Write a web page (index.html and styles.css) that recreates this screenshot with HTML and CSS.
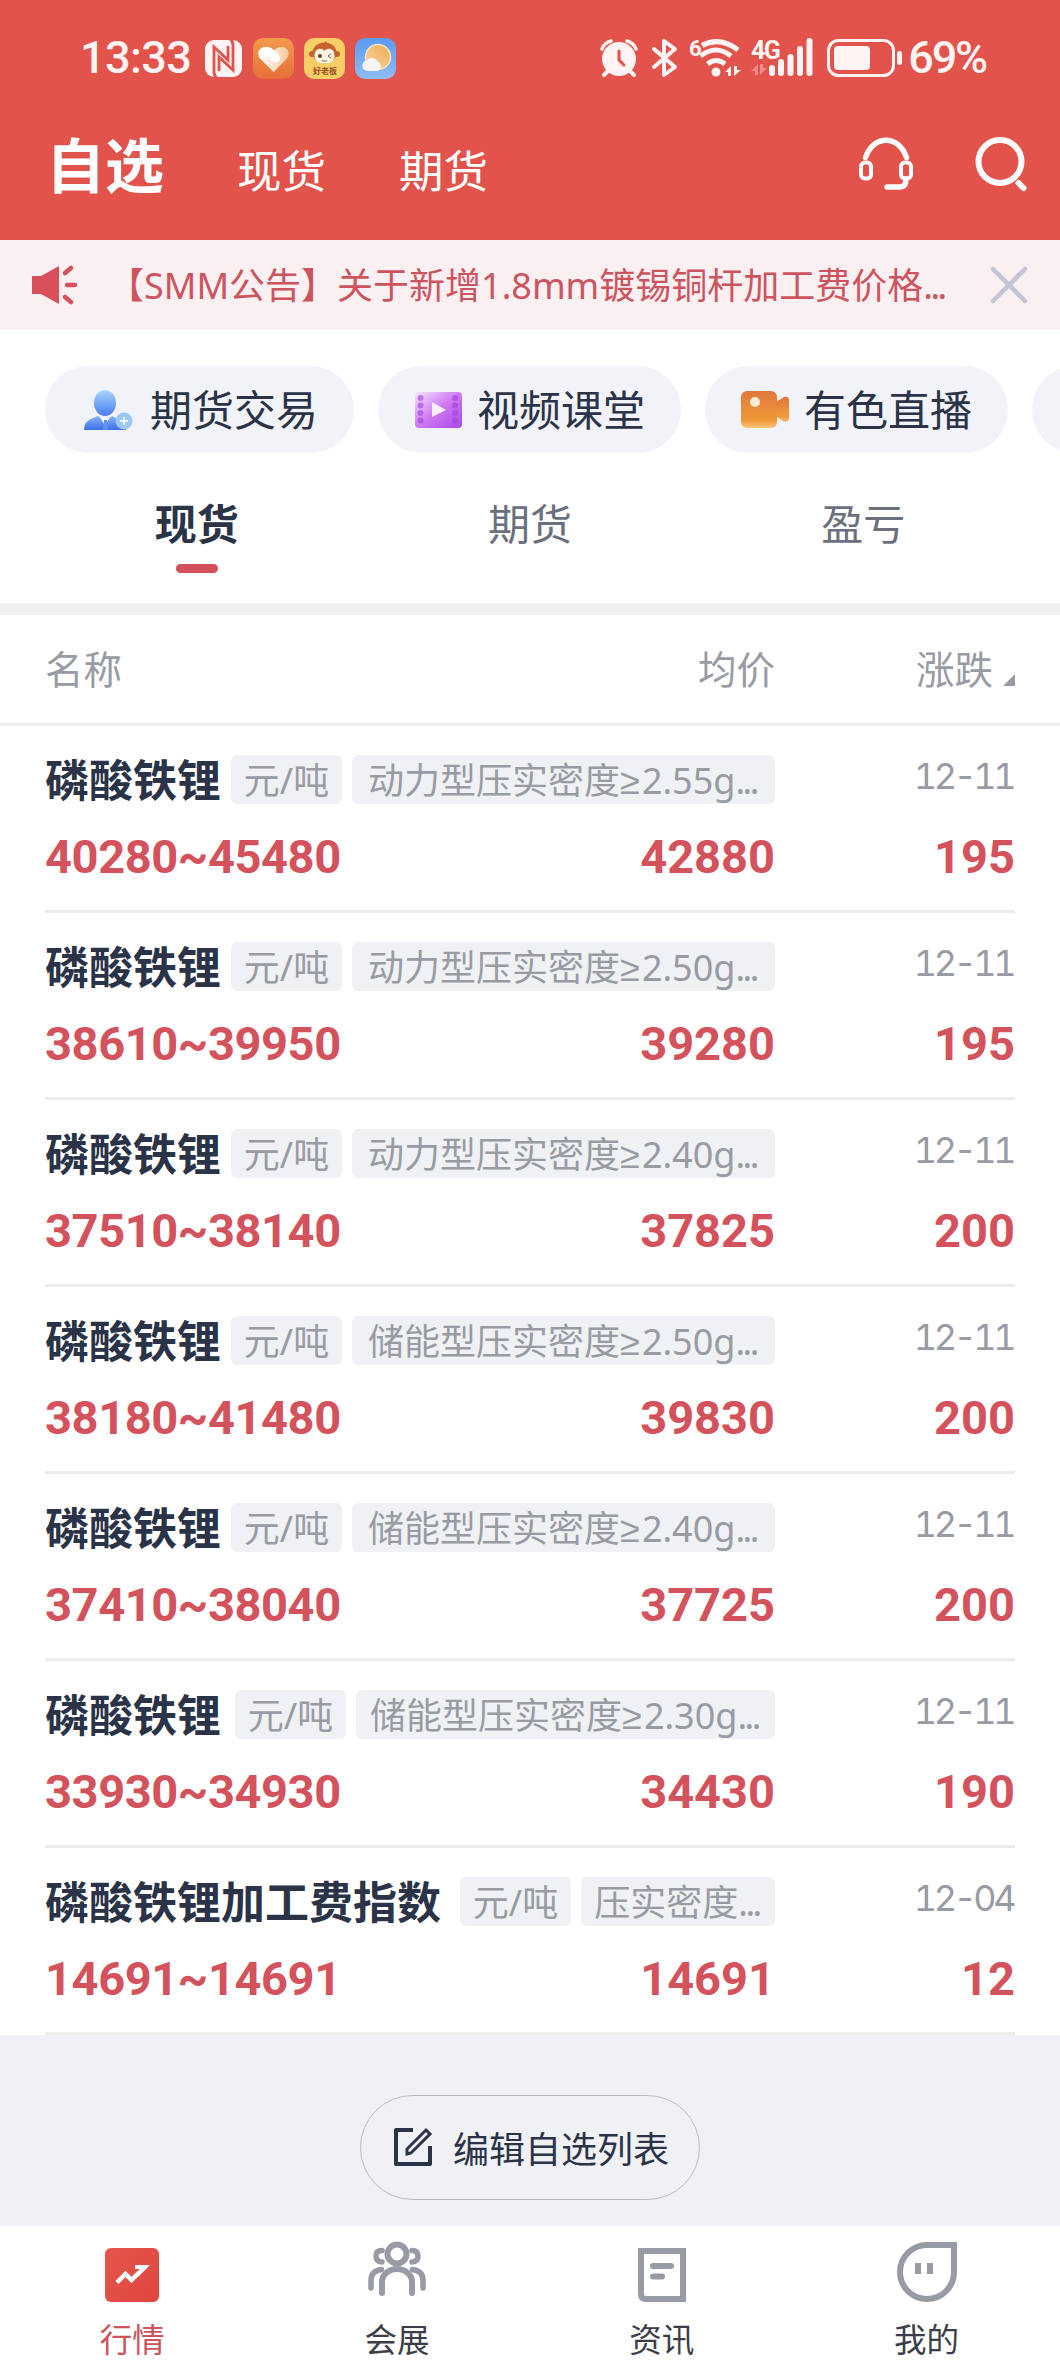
FILE: index.html
```html
<!DOCTYPE html>
<html lang="zh-CN">
<head>
    <meta charset="UTF-8">
    <title>自选</title>
    <meta name="viewport" content="width=device-width, initial-scale=1">
    <link rel="stylesheet" href="styles.css">
</head>
<body>
<header class="header">
    <div class="status">
        <span class="clock">13:33</span>
        <div class="apps">
            <svg width="39" height="39" viewBox="0 0 39 39">
                <rect x="1" y="1" width="37" height="37" rx="9" fill="#fff4f3"/>
                <path d="M13 39q-3-2-3-6V8l14 13V7M26 0q3 2 3 6v25L15 18v14" fill="none" stroke="#e1534b" stroke-width="2.800"/>
            </svg>
            <svg width="41" height="41" viewBox="0 0 41 41">
                <defs>
                    <linearGradient id="heartBg" x2="0" y2="1"><stop stop-color="#f29a4c"/><stop offset="1" stop-color="#e76f37"/></linearGradient>
                    <linearGradient id="heartFg" x2="1" y2="0"><stop stop-color="#fff"/><stop offset="1" stop-color="#f8c99f"/></linearGradient>
                </defs>
                <rect width="41" height="41" rx="10" fill="url(#heartBg)"/>
                <path d="M20.500 34L7 20.500C3 16 6 9 12 9c4 0 6 1.500 8.500 4C23 10.500 25 9 29 9c6 0 9 7 4.500 12z" fill="url(#heartFg)"/>
                <path d="M11.500 15q3-3 6 0l5 5" fill="none" stroke="#fff" stroke-width="9" stroke-linecap="round"/>
            </svg>
            <svg width="41" height="41" viewBox="0 0 41 41">
                <rect width="41" height="41" rx="10" fill="#f8cf66"/>
                <path d="M20 6l2-3 1 3" fill="#c5622f"/>
                <circle cx="8" cy="16" r="3" fill="#c5622f"/>
                <circle cx="33" cy="16" r="3" fill="#c5622f"/>
                <ellipse cx="20.500" cy="15" rx="12" ry="10.500" fill="#c5622f"/>
                <path d="M10.500 18c0-8 7-9 10-5 3-4 10-3 10 5 0 5-4 7.500-10 7.500s-10-2.500-10-7.500z" fill="#fff8e8"/>
                <circle cx="16" cy="18" r="2" fill="#6d3b1e"/>
                <path d="M27 16l-3 2 3 2M18 22.500q2.500 1.500 5 0" fill="none" stroke="#a2542a" stroke-width="1"/>
                <text x="21" y="36" class="app-name">好老板</text>
            </svg>
            <svg width="41" height="41" viewBox="0 0 41 41">
                <defs>
                    <linearGradient id="sky" x2="0" y2="1"><stop stop-color="#5b9af3"/><stop offset="1" stop-color="#8ebcf6"/></linearGradient>
                    <linearGradient id="sun" x1="1" x2="0" y2="1"><stop stop-color="#efab54"/><stop offset="1" stop-color="#f8d6a2"/></linearGradient>
                </defs>
                <rect width="41" height="41" rx="10" fill="url(#sky)"/>
                <circle cx="23" cy="19" r="12.500" fill="url(#sun)" stroke="#fbe6bb" stroke-width="1.500"/>
                <path d="M13 33a5.500 5.500 0 0 1-.5-11 6 6 0 0 1 10 1.500 5 5 0 0 1-.5 9.500z" fill="#f4f5f9"/>
            </svg>
        </div>
        <div class="signals">
            <svg class="alarm" width="38" height="38" viewBox="0 0 38 38">
                <circle cx="19" cy="20" r="17" fill="#fff4f3"/>
                <path d="M2 10q2-6 9-8M36 10q-2-6-9-8" fill="none" stroke="#fff4f3" stroke-width="3.500" stroke-linecap="round"/>
                <path d="M8 32l-4 4M30 32l4 4" stroke="#fff4f3" stroke-width="4" stroke-linecap="round"/>
                <path d="M19 12v9l5 5" fill="none" stroke="#e1534b" stroke-width="3" stroke-linecap="round" stroke-linejoin="round"/>
            </svg>
            <svg class="bluetooth" width="26" height="38" viewBox="0 0 26 38">
                <path d="M2 10l21 18-11 8V2l11 8L2 28" fill="none" stroke="#fff4f3" stroke-width="4" stroke-linecap="round" stroke-linejoin="round"/>
            </svg>
            <svg class="wifi" width="53" height="42" viewBox="0 0 53 42">
                <text x="0" y="19" class="signal-text signal-six">6</text>
                <g fill="none" stroke="#fff4f3" stroke-width="5">
                    <path d="M13 8.500Q31-1 49 13"/>
                    <path d="M11.500 19Q27 7 42 19"/>
                    <path d="M18.500 27Q27 20 36 27"/>
                </g>
                <circle cx="27" cy="35" r="4.500" fill="#fff4f3"/>
                <path d="M36 35l6-6v10h-3v-4zM45 29h3v4h4l-7 6z" fill="#fff4f3"/>
            </svg>
            <svg class="mobile" width="63" height="40" viewBox="0 0 63 40">
                <text x="0" y="20.500" class="signal-text">4G</text>
                <path d="M0 33l7-7v11H4v-4zM9 26h3v4h4l-7 7z" fill="#f08a86"/>
                <path d="M21 30v5M30 24v11M39.500 19v16M49 11v24M58.500 3v32" stroke="#fff4f3" stroke-width="6" stroke-linecap="round"/>
            </svg>
            <svg class="battery" width="76" height="38" viewBox="0 0 76 38">
                <rect x="1.500" y="1.500" width="65" height="35" rx="10" fill="none" stroke="#fff4f3" stroke-width="3"/>
                <rect x="7" y="7" width="36" height="24" rx="4" fill="#fff4f3"/>
                <rect x="70" y="12" width="5" height="14" rx="2.500" fill="#fff4f3"/>
            </svg>
            <span class="percent">69%</span>
        </div>
    </div>
    <nav class="top-nav">
        <a class="current">自选</a>
        <a>现货</a>
        <a>期货</a>
        <svg class="headset" width="56" height="54" viewBox="0 0 56 54" fill="none" stroke="#fff" stroke-width="4">
            <path d="M7.500 20.500C15-2.500 41-2.500 48.500 20.500" stroke-width="5.500" stroke-linecap="round"/>
            <rect x="3" y="25.500" width="10" height="16" rx="4"/>
            <rect x="43" y="25.500" width="10" height="16" rx="4"/>
            <path d="M48 42q0 8-6 8H29" stroke-width="5.500" stroke-linecap="round"/>
        </svg>
        <svg width="54" height="56" viewBox="0 0 54 56" fill="none" stroke="#fff" stroke-width="6">
            <circle cx="26" cy="25.500" r="21.500"/>
            <path d="M44.500 47l5 5" stroke-linecap="round"/>
        </svg>
    </nav>
</header>

<div class="notice">
    <svg width="46" height="40" viewBox="0 0 46 40">
        <path d="M0 11h9L27 1v38L9 29H0z" fill="#d9505b"/>
        <path d="M33 8l6-5M35 20h8M33 32l6 5" stroke="#d9505b" stroke-width="4.500" stroke-linecap="round"/>
    </svg>
    <span>【SMM公告】关于新增1.8mm镀锡铜杆加工费价格<i class="dots">...</i></span>
    <svg width="38" height="38" viewBox="0 0 38 38">
        <path d="M3 3l32 32M35 3L3 35" stroke="#c3c4d5" stroke-width="4.500" stroke-linecap="round"/>
    </svg>
</div>

<div class="shortcuts">
    <a class="pill pill-trade">
        <svg width="50" height="42" viewBox="0 0 50 42">
            <defs>
                <linearGradient id="man" x2="0" y2="1"><stop stop-color="#a9d8fb"/><stop offset="1" stop-color="#4a7bf4"/></linearGradient>
                <linearGradient id="suit" x2="0" y2="1"><stop stop-color="#82b6f8"/><stop offset="1" stop-color="#3d6fe8"/></linearGradient>
            </defs>
            <ellipse cx="21" cy="14" rx="11" ry="13" fill="url(#man)"/>
            <path d="M0 41q0-9 9-12l5-2 7 5 7-5 6 3q8 3 8 11z" fill="url(#suit)"/>
            <path d="M16 28l5 9 5-9-5 3z" fill="#fff"/>
            <path d="M20 31h3l1 10h-5z" fill="#5f92f2"/>
            <circle cx="40" cy="32" r="8.500" fill="#9cc8f8"/>
            <path d="M40 28v8M36 32h8" stroke="#e8f4ff" stroke-width="2"/>
        </svg>
        <span>期货交易</span>
    </a>
    <a class="pill">
        <svg width="50" height="40" viewBox="0 0 50 40">
            <defs>
                <linearGradient id="film" x2="1" y2="1"><stop stop-color="#f5e4fc"/><stop offset=".5" stop-color="#ce78f2"/><stop offset="1" stop-color="#aa48e9"/></linearGradient>
            </defs>
            <rect x="1" y="2" width="47" height="36" rx="4" fill="url(#film)"/>
            <g fill="#a43fe0" opacity=".6">
                <circle cx="6.500" cy="8" r="3"/><circle cx="6.500" cy="15.500" r="3"/><circle cx="6.500" cy="23" r="3"/><circle cx="6.500" cy="30.500" r="3"/>
                <circle cx="41" cy="8" r="3"/><circle cx="41" cy="15.500" r="3"/><circle cx="41" cy="23" r="3"/><circle cx="41" cy="30.500" r="3"/>
            </g>
            <path d="M18 12l14 8-14 7z" fill="#fbeefe"/>
        </svg>
        <span>视频课堂</span>
    </a>
    <a class="pill">
        <svg width="50" height="40" viewBox="0 0 50 40">
            <defs>
                <linearGradient id="cam" x2="0" y2="1"><stop stop-color="#e2773e"/><stop offset=".8" stop-color="#f09a38"/><stop offset="1" stop-color="#f8c579"/></linearGradient>
            </defs>
            <rect y="1" width="36" height="37" rx="6" fill="url(#cam)"/>
            <path d="M35 12l8-5q5-1 5 3v18q0 4-5 4l-8-6z" fill="url(#cam)"/>
            <circle cx="14" cy="12" r="5" fill="#fdebd8"/>
        </svg>
        <span>有色直播</span>
    </a>
    <a class="pill"></a>
</div>

<nav class="tabs">
    <a class="active">现货</a>
    <a>期货</a>
    <a>盈亏</a>
</nav>

<div class="table-head">
    <span>名称</span>
    <span class="col-avg">均价</span>
    <span class="col-change sort">涨跌</span>
</div>

<ul class="list">
    <li class="item">
        <div class="line"><b class="name">磷酸铁锂</b><span class="tag">元/吨</span><span class="tag spec">动力型压实密度<i class="ge">≥</i>2.55g<i class="dots">...</i></span><time>12-11</time></div>
        <div class="line price"><span class="range">40280~45480</span><span class="avg">42880</span><span class="change">195</span></div>
    </li>
    <li class="item">
        <div class="line"><b class="name">磷酸铁锂</b><span class="tag">元/吨</span><span class="tag spec">动力型压实密度<i class="ge">≥</i>2.50g<i class="dots">...</i></span><time>12-11</time></div>
        <div class="line price"><span class="range">38610~39950</span><span class="avg">39280</span><span class="change">195</span></div>
    </li>
    <li class="item">
        <div class="line"><b class="name">磷酸铁锂</b><span class="tag">元/吨</span><span class="tag spec">动力型压实密度<i class="ge">≥</i>2.40g<i class="dots">...</i></span><time>12-11</time></div>
        <div class="line price"><span class="range">37510~38140</span><span class="avg">37825</span><span class="change">200</span></div>
    </li>
    <li class="item">
        <div class="line"><b class="name">磷酸铁锂</b><span class="tag">元/吨</span><span class="tag spec">储能型压实密度<i class="ge">≥</i>2.50g<i class="dots">...</i></span><time>12-11</time></div>
        <div class="line price"><span class="range">38180~41480</span><span class="avg">39830</span><span class="change">200</span></div>
    </li>
    <li class="item">
        <div class="line"><b class="name">磷酸铁锂</b><span class="tag">元/吨</span><span class="tag spec">储能型压实密度<i class="ge">≥</i>2.40g<i class="dots">...</i></span><time>12-11</time></div>
        <div class="line price"><span class="range">37410~38040</span><span class="avg">37725</span><span class="change">200</span></div>
    </li>
    <li class="item">
        <div class="line"><b class="name name-wide">磷酸铁锂</b><span class="tag">元/吨</span><span class="tag spec">储能型压实密度<i class="ge">≥</i>2.30g<i class="dots">...</i></span><time>12-11</time></div>
        <div class="line price"><span class="range">33930~34930</span><span class="avg">34430</span><span class="change">190</span></div>
    </li>
    <li class="item">
        <div class="line"><b class="name name-index">磷酸铁锂加工费指数</b><span class="tag">元/吨</span><span class="tag spec">压实密度<i class="dots">...</i></span><time>12-04</time></div>
        <div class="line price"><span class="range">14691~14691</span><span class="avg">14691</span><span class="change">12</span></div>
    </li>
</ul>

<div class="edit-area">
    <a class="edit">
        <svg width="40" height="40" viewBox="0 0 40 40" fill="none" stroke="#2a3347" stroke-width="4">
            <path d="M20 3H3v34h34V19" stroke-linejoin="round" stroke-linecap="butt"/>
            <path d="M14 27v-5L33 3l4 4-19 19z" stroke-width="3"/>
        </svg>
        编辑自选列表
    </a>
</div>

<nav class="tabbar">
    <a class="on">
        <svg width="60" height="60" viewBox="0 0 60 60">
            <defs><linearGradient id="trend" x2="1" y2="1"><stop stop-color="#e5564e"/><stop offset="1" stop-color="#df453e"/></linearGradient></defs>
            <rect x="3" y="6" width="54" height="54" rx="6" fill="url(#trend)"/>
            <path d="M15 40.500L23.500 32l6 6 8-8" fill="none" stroke="#fff" stroke-width="4.500"/>
            <path d="M33 23h15L36 35l1-8h-4z" fill="#fff"/>
        </svg>
        行情
    </a>
    <a>
        <svg width="60" height="60" viewBox="0 0 60 60" fill="none" stroke="#989ba5" stroke-width="6" stroke-linecap="round">
            <circle cx="30" cy="12" r="9.500"/>
            <path d="M15 51V40a15 13 0 0 1 30 0v11"/>
            <path d="M15 8.500q-6 0-6 5.500t6 6M45 8.500q6 0 6 5.500t-6 6" stroke-width="5.500"/>
            <path d="M14.500 27.500Q4 29 4 38v8M45.500 27.500Q56 29 56 38v8" stroke-width="5.500"/>
        </svg>
        会展
    </a>
    <a>
        <svg width="60" height="60" viewBox="0 0 60 60" fill="none" stroke="#989ba5" stroke-width="6">
            <path d="M9 9h42v48H14q-5 0-5-5z"/>
            <path d="M21 24h18M21 34.500h9" stroke-linecap="round"/>
        </svg>
        资讯
    </a>
    <a>
        <svg width="60" height="60" viewBox="0 0 60 60" fill="none" stroke="#989ba5" stroke-width="6">
            <path d="M30 3h27v27A27 27 0 1 1 30 3z"/>
            <path d="M21 21v11M33 21v11"/>
        </svg>
        我的
    </a>
</nav>
</body>
</html>
```
FILE: styles.css
```css
* {
    box-sizing: border-box;
}

body {
    margin: 0;
    width: 1060px;
    font-family: "Noto Sans", "Noto Sans CJK SC", sans-serif;
    background-color: #fff;
    color: #2a3347;
    overflow-x: hidden;
}

svg {
    display: block;
    flex: none;
    overflow: visible;
}

.header {
    height: 240px;
    background-color: #e1534b;
    color: #fff;
}

.status {
    display: flex;
    align-items: center;
    height: 116px;
    padding: 0 74px 0 80px;
    color: #fff4f3;
    font-family: Roboto, sans-serif;
    font-size: 45px;
    font-weight: 500;
    line-height: 50px;
}

.clock {
    width: 124px;
    letter-spacing: -0.6px;
}

.apps {
    display: flex;
    align-items: center;
    gap: 10px;
}

.app-name {
    font: bold 8px "Noto Sans CJK SC", sans-serif;
    fill: #9a4e25;
    text-anchor: middle;
}

.signals {
    display: flex;
    align-items: center;
    margin-left: auto;
}

.bluetooth {
    margin-left: 14px;
}

.wifi {
    margin-left: 11px;
}

.mobile {
    margin-left: 9px;
}

.battery {
    margin: 0 5px 0 13px;
}

.signal-text {
    font: bold 25px Roboto, sans-serif;
    fill: #fff4f3;
    letter-spacing: -1.5px;
}

.signal-six {
    font-size: 22px;
}

.percent {
    letter-spacing: -2.2px;
}

.top-nav {
    display: flex;
    align-items: baseline;
    padding: 9px 32px 0 46px;
    font-size: 44.5px;
    line-height: 80px;
}

.top-nav a {
    margin-right: 73px;
}

.top-nav .current {
    font-size: 59px;
    font-weight: bold;
}

.top-nav svg {
    align-self: flex-start;
    margin-top: 11px;
}

.top-nav .headset {
    margin: 12px 60px 0 auto;
}

.notice {
    display: flex;
    align-items: center;
    height: 90px;
    padding: 0 32px;
    background-color: #faeff1;
    color: #cd545e;
    font-size: 36px;
}

.notice span {
    flex: 1;
    margin-left: 30px;
    padding-bottom: 3px;
    white-space: nowrap;
}

.dots,
.ge {
    font-style: normal;
    letter-spacing: -2.5px;
}

.ge {
    font-family: "Liberation Sans", sans-serif;
    letter-spacing: 2px;
}

.shortcuts {
    display: flex;
    gap: 24px;
    padding: 36px 0 0 45px;
    overflow: hidden;
}

.pill {
    display: flex;
    flex: none;
    align-items: center;
    gap: 13px;
    width: 303px;
    height: 87px;
    padding-left: 36px;
    border-radius: 44px;
    background-color: #f2f3f8;
    font-size: 42px;
}

.pill span {
    padding-bottom: 4px;
}

.pill-trade {
    width: 309px;
    gap: 16px;
    padding-left: 39px;
}

.tabs {
    display: grid;
    grid-template-columns: repeat(3, 1fr);
    height: 162px;
    padding: 36px 30px 0;
    border-bottom: 12px solid #f0f1f3;
    color: #6a707d;
    font-size: 42px;
    line-height: 69px;
    text-align: center;
}

.tabs .active {
    color: #2a3347;
    font-weight: bold;
}

.tabs .active::after {
    content: "";
    display: block;
    width: 42px;
    height: 9px;
    margin: 6px auto 0;
    border-radius: 5px;
    background-color: #d3505a;
}

.table-head {
    display: flex;
    align-items: center;
    height: 111px;
    padding: 0 45px 5px;
    border-bottom: 3px solid #ececed;
    color: #989ba4;
    font-size: 38.5px;
}

.col-avg {
    margin-left: auto;
}

.col-change {
    display: flex;
    justify-content: flex-end;
    width: 240px;
}

.sort::after {
    content: "";
    align-self: flex-end;
    margin: 0 0 9px 10px;
    border-bottom: 12px solid #989ba4;
    border-left: 12px solid transparent;
}

.list {
    margin: 0;
    padding: 0 45px;
    list-style: none;
}

.item {
    height: 187px;
    padding-top: 29px;
    border-bottom: 3px solid #ececed;
}

.line {
    display: flex;
    height: 49px;
    line-height: 49px;
}

.name {
    width: 186px;
    font-size: 44px;
    line-height: 51px;
    white-space: nowrap;
}

.name-wide {
    width: 190px;
}

.name-index {
    width: 415px;
}

.tag {
    flex: none;
    width: 111px;
    margin-right: 10px;
    border-radius: 6px;
    background-color: #f0f1f4;
    color: #989ba4;
    font-size: 36px;
    line-height: 51px;
    text-align: center;
    white-space: nowrap;
}

.spec {
    flex: 1;
    margin-right: 0;
    padding-right: 2px;
}

time {
    width: 240px;
    padding-right: 2px;
    color: #989ba4;
    font-family: Inter, sans-serif;
    font-size: 36px;
    font-feature-settings: "tnum";
    letter-spacing: -3.5px;
    line-height: 42px;
    text-align: right;
}

.price {
    margin-top: 28px;
    color: #d3525c;
    font-family: Roboto, sans-serif;
    font-size: 47px;
    font-weight: bold;
}

.range {
    letter-spacing: -0.4px;
}

.avg {
    margin-left: auto;
}

.change {
    width: 240px;
    text-align: right;
}

.edit-area {
    display: flex;
    justify-content: center;
    height: 191px;
    padding-top: 60px;
    background-color: #f0f1f4;
}

.edit {
    display: flex;
    align-items: center;
    gap: 20px;
    width: 340px;
    height: 105px;
    padding: 0 0 1px 32px;
    border: 1px solid #b9bbc3;
    border-radius: 53px;
    font-size: 36px;
    white-space: nowrap;
}

.tabbar {
    display: grid;
    grid-template-columns: repeat(4, 1fr);
    height: 150px;
    padding: 16px 1px 0 0;
    color: #3b3e48;
    font-size: 32.5px;
    line-height: 48px;
    text-align: center;
}

.tabbar svg {
    margin: 0 auto 14px;
}

.tabbar .on {
    color: #cd545e;
}
```
